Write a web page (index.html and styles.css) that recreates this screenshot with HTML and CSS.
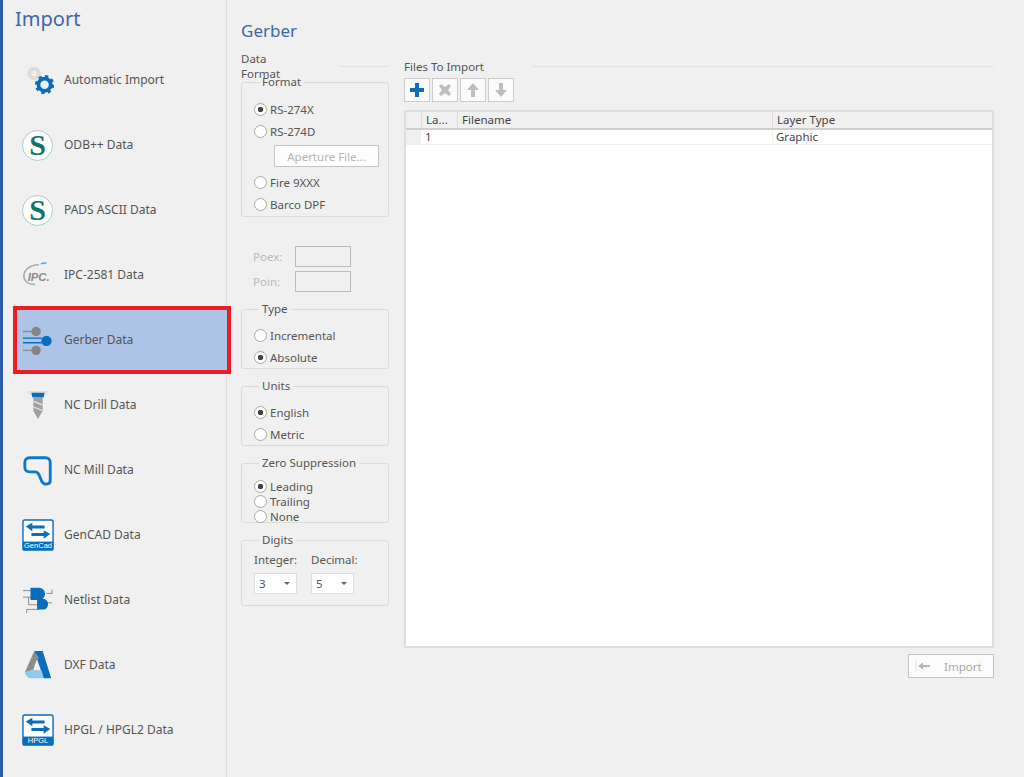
FILE: index.html
```html
<!DOCTYPE html>
<html lang="en">
<head>
    <meta charset="UTF-8">
    <title>Import - Gerber</title>
    <link rel="stylesheet" href="styles.css">
</head>
<body>
<div class="app">
    <aside class="sidebar">
        <h1 class="sidebar-title">Import</h1>
        <ul class="import-list">
            <li class="import-item">
                <svg class="item-icon" viewBox="0 0 34 34"><circle cx="13" cy="10" r="5" fill="none" stroke="#dcdcdc" stroke-width="4"/><circle cx="24" cy="22" r="6.5" fill="none" stroke="#0a6cbd" stroke-width="4"/><circle cx="24" cy="22" r="9" fill="none" stroke="#0a6cbd" stroke-width="2.5" stroke-dasharray="3.5 3.6"/></svg>
                <span>Automatic Import</span>
            </li>
            <li class="import-item">
                <span class="s-logo">S</span>
                <span>ODB++ Data</span>
            </li>
            <li class="import-item">
                <span class="s-logo">S</span>
                <span>PADS ASCII Data</span>
            </li>
            <li class="import-item">
                <svg class="item-icon" viewBox="0 0 34 34"><path d="M18 6C8 6 2 12 2 18c0 6 5 9 12 9" fill="none" stroke="#a9a9a9" stroke-width="1.6"/><path d="M20 5l6 -1" stroke="#5aa5d8" stroke-width="1.6"/><text x="6" y="23" class="ipc-text">IPC.</text></svg>
                <span>IPC-2581 Data</span>
            </li>
            <li class="import-item active">
                <svg class="item-icon" viewBox="0 0 34 34"><path d="M1 8h12M1 28h12" stroke="#8a8a8a" stroke-width="1.5"/><circle cx="15" cy="8" r="5" fill="#858585"/><circle cx="15" cy="28" r="5" fill="#858585"/><path d="M1 15h20M1 20h20" stroke="#0a6cbd" stroke-width="1.5"/><circle cx="26" cy="18" r="5.5" fill="#0a6cbd"/></svg>
                <span>Gerber Data</span>
            </li>
            <li class="import-item">
                <svg class="item-icon" viewBox="0 0 34 34"><path d="M5 2h24l-3 4H8z" fill="#e2e2e2"/><path d="M10 4h14l-1 5H11z" fill="#0a6cbd"/><path d="M12 9h10v14l-5 9-5-9z" fill="#a0a0a0"/><path d="M12 13l10 4M12 19l10 4" stroke="#ddd" stroke-width="1.5"/></svg>
                <span>NC Drill Data</span>
            </li>
            <li class="import-item">
                <svg class="item-icon" viewBox="0 0 34 34"><path d="M8 4h17c3 0 5 2 5 5v19c0 3-2 4-4 4s-4-1-5-3l-3-7c-1-2-2-3-4-3H8c-3 0-5-2-5-5V9c0-3 2-5 5-5z" fill="none" stroke="#0a78c8" stroke-width="3"/></svg>
                <span>NC Mill Data</span>
            </li>
            <li class="import-item">
                <svg class="item-icon" viewBox="0 0 34 34"><use href="#box-arrows"/><text x="17" y="31" class="box-text">GenCad</text></svg>
                <span>GenCAD Data</span>
            </li>
            <li class="import-item">
                <svg class="item-icon" viewBox="0 0 34 34"><path d="M1 7h9M1 14h9M7 14v8h11M5 27h13M5 27v4M26 10h6V6M32 20H24" fill="none" stroke="#888" stroke-width="1"/><path d="M9 4h9a6.500 6.500 0 0 1 0 13H9z" fill="#0a6cbd"/><path d="M16 16h8a6 6 0 0 1 0 11h-8z" fill="#0a6cbd"/></svg>
                <span>Netlist Data</span>
            </li>
            <li class="import-item">
                <svg class="item-icon" viewBox="0 0 34 34"><path d="M13 2h9l9 29h-8z" fill="#0a6cbd"/><path d="M13 2L3 25l9-3 3-9 3-4z" fill="#8c8c8c"/><path d="M3 25c6-3 13-3 18-2l2 8H9c-3 0-5-3-6-6z" fill="#8ccaf0"/></svg>
                <span>DXF Data</span>
            </li>
            <li class="import-item">
                <svg class="item-icon" viewBox="0 0 34 34"><use href="#box-arrows"/><text x="17" y="31" class="box-text">HPGL</text></svg>
                <span>HPGL / HPGL2 Data</span>
            </li>
        </ul>
    </aside>

    <main class="main">
        <h2 class="page-title">Gerber</h2>
        <div class="columns">
            <section class="left-col">
                <div class="section-head"><span>Data Format</span><i class="head-line short"></i></div>

                <fieldset class="group format-group">
                    <legend>Format</legend>
                    <label class="radio checked">RS-274X</label>
                    <label class="radio">RS-274D</label>
                    <button class="aperture-btn">Aperture File...</button>
                    <label class="radio">Fire 9XXX</label>
                    <label class="radio">Barco DPF</label>
                </fieldset>

                <div class="pol-fields">
                    <div class="pol-row"><span>Poex:</span><div class="pol-input"></div></div>
                    <div class="pol-row"><span>Poin:</span><div class="pol-input"></div></div>
                </div>

                <fieldset class="group">
                    <legend>Type</legend>
                    <label class="radio">Incremental</label>
                    <label class="radio checked">Absolute</label>
                </fieldset>

                <fieldset class="group">
                    <legend>Units</legend>
                    <label class="radio checked">English</label>
                    <label class="radio">Metric</label>
                </fieldset>

                <fieldset class="group">
                    <legend>Zero Suppression</legend>
                    <label class="radio checked">Leading</label>
                    <label class="radio">Trailing</label>
                    <label class="radio">None</label>
                </fieldset>

                <fieldset class="group digits-group">
                    <legend>Digits</legend>
                    <div class="digits-row">
                        <div class="digit-field">
                            <span>Integer:</span>
                            <div class="combo">3<i class="caret"></i></div>
                        </div>
                        <div class="digit-field">
                            <span>Decimal:</span>
                            <div class="combo">5<i class="caret"></i></div>
                        </div>
                    </div>
                </fieldset>
            </section>

            <section class="right-col">
                <div class="section-head"><span>Files To Import</span><i class="head-line"></i></div>
                <div class="toolbar">
                    <button class="tool-btn">
                        <svg viewBox="0 0 16 16"><path d="M6 1h4v5h5v4h-5v5H6v-5H1V6h5z" fill="#0a6cbd"/></svg>
                    </button>
                    <button class="tool-btn">
                        <svg viewBox="0 0 16 16"><path d="M4 2l4 3 4-3 2 2-3 4 3 4-2 2-4-3-4 3-2-2 3-4-3-4z" fill="#bdbdbd"/></svg>
                    </button>
                    <button class="tool-btn">
                        <svg viewBox="0 0 16 16"><path d="M8 1l6 7h-4v7H6V8H2z" fill="#bdbdbd"/></svg>
                    </button>
                    <button class="tool-btn">
                        <svg viewBox="0 0 16 16"><path d="M8 15l6-7h-4V1H6v7H2z" fill="#bdbdbd"/></svg>
                    </button>
                </div>

                <div class="file-table">
                    <div class="table-row table-head">
                        <div class="row-head"></div>
                        <div class="cell">La...</div>
                        <div class="cell">Filename</div>
                        <div class="cell">Layer Type</div>
                    </div>
                    <div class="table-row table-data">
                        <div class="row-head"></div>
                        <div class="cell">1</div>
                        <div class="cell"></div>
                        <div class="cell">Graphic</div>
                    </div>
                </div>

                <div class="actions">
                    <button class="import-btn">
                        <svg viewBox="0 0 16 10"><path d="M1 0v10" stroke="#ddd"/><path d="M3 5l5-3.500V4h7v2H8v2.500z" fill="#b5b5b5"/></svg>
                        <span>Import</span>
                    </button>
                </div>
            </section>
        </div>
    </main>
</div>

<svg class="defs">
    <symbol id="box-arrows" viewBox="0 0 34 34">
        <rect x="1" y="1" width="32" height="32" rx="2" fill="#fff" stroke="#0a6cbd" stroke-width="1.500"/>
        <rect x="1" y="24" width="32" height="9" fill="#0a6cbd"/>
        <path d="M4 8l7-4v3h13v3H11v3zM30 16l-7-4v3H10v3h13v3z" fill="#0a6cbd"/>
    </symbol>
</svg>
</body>
</html>
```

FILE: styles.css
```css
* {
    box-sizing: border-box;
}

html, body {
    margin: 0;
    height: 100%;
    overflow: hidden;
}

body {
    font-family: "Noto Sans", Arial, sans-serif;
    font-size: 12px;
    color: #555;
    background: #f0f0f0;
}

.defs {
    position: absolute;
    width: 0;
    height: 0;
}

.app {
    display: flex;
    height: 777px;
    border-left: 3px solid #2f5ca6;
}

/* left list */
.sidebar {
    width: 224px;
    flex-shrink: 0;
    border-right: 1px solid #dcdcdc;
    padding-left: 14px;
}

.sidebar-title {
    margin: 5px 0 0 -2px;
    font-size: 20px;
    font-weight: 400;
    line-height: 27px;
    color: #3d66ac;
}

.import-list {
    list-style: none;
    margin: 18px 0 0;
    padding: 0;
    display: flex;
    flex-direction: column;
    gap: 5px;
}

.import-item {
    display: flex;
    align-items: center;
    gap: 10px;
    height: 60px;
    padding-left: 5px;
    margin-right: -1px;
    line-height: 16px;
}

.import-item.active {
    background: #aec4e6;
    outline: 4px solid #ed1c24;
    position: relative;
}

.item-icon {
    width: 32px;
    height: 32px;
    flex-shrink: 0;
}

.s-logo {
    width: 31px;
    height: 31px;
    margin-right: 1px;
    flex-shrink: 0;
    display: flex;
    align-items: center;
    justify-content: center;
    border-radius: 50%;
    border: 1.500px solid #a9cfc9;
    background: #fff;
    color: #0f7469;
    font-family: "Liberation Serif", serif;
    font-size: 30px;
    font-weight: 700;
}

.ipc-text {
    font-family: "Liberation Sans", Arial, sans-serif;
    font-size: 12px;
    font-style: italic;
    font-weight: 700;
    fill: #8a8a8a;
}

.box-text {
    font-family: "Liberation Sans", Arial, sans-serif;
    font-size: 8px;
    fill: #fff;
    text-anchor: middle;
}

/* main panel */
.main {
    flex: 1;
    padding: 0 30px 0 14px;
}

.page-title {
    margin: 19px 0 0;
    font-size: 17px;
    font-weight: 400;
    line-height: 24px;
    color: #3d66ac;
}

.columns {
    display: flex;
    gap: 15px;
    margin-top: 15px;
}

.left-col {
    width: 148px;
    flex-shrink: 0;
}

.right-col {
    flex: 1;
}

.section-head {
    display: flex;
    align-items: center;
    justify-content: space-between;
    height: 16px;
    font-size: 11.500px;
}

.head-line {
    display: block;
    flex: 1;
    height: 1px;
    margin-left: 48px;
    background: #e2e2e2;
}

.head-line.short {
    flex: none;
    width: 50px;
}

.group {
    margin: 10px 0 0;
    padding: 9px 0 0 12px;
    min-width: 0;
    height: 67px;
    border: 1px solid #dcdcdc;
    border-radius: 3px;
    display: flex;
    flex-direction: column;
}

.group legend {
    margin-left: 5px;
    padding: 0 3px;
    line-height: 14px;
    font-size: 11.500px;
}

.format-group {
    margin-top: 1px;
    height: 142px;
    padding-top: 9px;
}

.radio {
    display: flex;
    align-items: center;
    gap: 3px;
    height: 22.500px;
    font-size: 11.500px;
}

.radio::before {
    content: "";
    width: 11px;
    height: 11px;
    flex-shrink: 0;
    border-radius: 50%;
    border: 1px solid #aaa;
    background: #fff;
}

.radio.checked::before {
    background: radial-gradient(circle, #444 0 2.500px, #fff 3px);
}

.aperture-btn {
    width: 105px;
    height: 22px;
    margin: 2px 0 4px 20px;
    padding: 0;
    border: 1px solid #c4c4c4;
    background: #fdfdfd;
    color: #b5b5b5;
    font: inherit;
    font-size: 11.500px;
}

.pol-fields {
    display: flex;
    flex-direction: column;
    gap: 4px;
    margin-top: 29px;
    padding-left: 12px;
    color: #b9b9b9;
    font-size: 11.500px;
}

.pol-row {
    display: flex;
    align-items: center;
    justify-content: space-between;
    width: 98px;
}

.pol-input {
    width: 56px;
    height: 21px;
    border: 1px solid #bbb;
}

.digits-group {
    height: 73px;
    padding-top: 6px;
}

.digits-row {
    display: flex;
    gap: 14px;
}

.digit-field {
    display: flex;
    flex-direction: column;
    gap: 6px;
    width: 43px;
    font-size: 11.500px;
    white-space: nowrap;
    line-height: 14px;
}

.combo {
    display: flex;
    align-items: center;
    justify-content: space-between;
    height: 21px;
    padding: 0 6px 0 4px;
    border: 1px solid #ddd;
    background: #fff;
}

.caret {
    width: 0;
    height: 0;
    border-left: 3px solid transparent;
    border-right: 3px solid transparent;
    border-top: 3px solid #666;
}

/* files table */
.toolbar {
    display: flex;
    gap: 2px;
    margin-top: 4px;
}

.tool-btn {
    width: 26px;
    height: 24px;
    padding: 0;
    display: flex;
    align-items: center;
    justify-content: center;
    border: 1px solid #ccc;
    background: #fbfbfb;
}

.tool-btn svg {
    width: 16px;
    height: 16px;
}

.file-table {
    height: 538px;
    margin-top: 8px;
    border: 2px solid #dedede;
    background: #fff;
}

.table-row {
    display: grid;
    grid-template-columns: 15px 36px 315px 1fr;
}

.table-head {
    height: 18px;
    border: solid #cfcfcf;
    border-width: 0 0 2px;
    background: #f0f0f0;
    margin-right: 0;
}

.table-head .cell {
    border-left: 1px solid #dcdcdc;
    line-height: 16px;
}

.table-data {
    height: 15px;
    border-bottom: 1px solid #efefef;
    line-height: 14px;
}

.table-data .row-head {
    background: #f0f0f0;
}

.table-data .cell:last-child {
    border-left: 1px solid #f0f0f0;
    padding-left: 3px;
}

.cell {
    padding-left: 4px;
    font-size: 11.500px;
    color: #444;
    white-space: nowrap;
    overflow: hidden;
}

.actions {
    display: flex;
    justify-content: flex-end;
    margin-top: 6px;
}

.import-btn {
    display: flex;
    align-items: center;
    gap: 13px;
    width: 86px;
    height: 24px;
    padding: 0 0 0 6px;
    border: 1px solid #c4c4c4;
    background: #fbfbfb;
    color: #aaa;
    font: inherit;
    font-size: 11.500px;
}

.import-btn svg {
    width: 16px;
    height: 10px;
}
```
